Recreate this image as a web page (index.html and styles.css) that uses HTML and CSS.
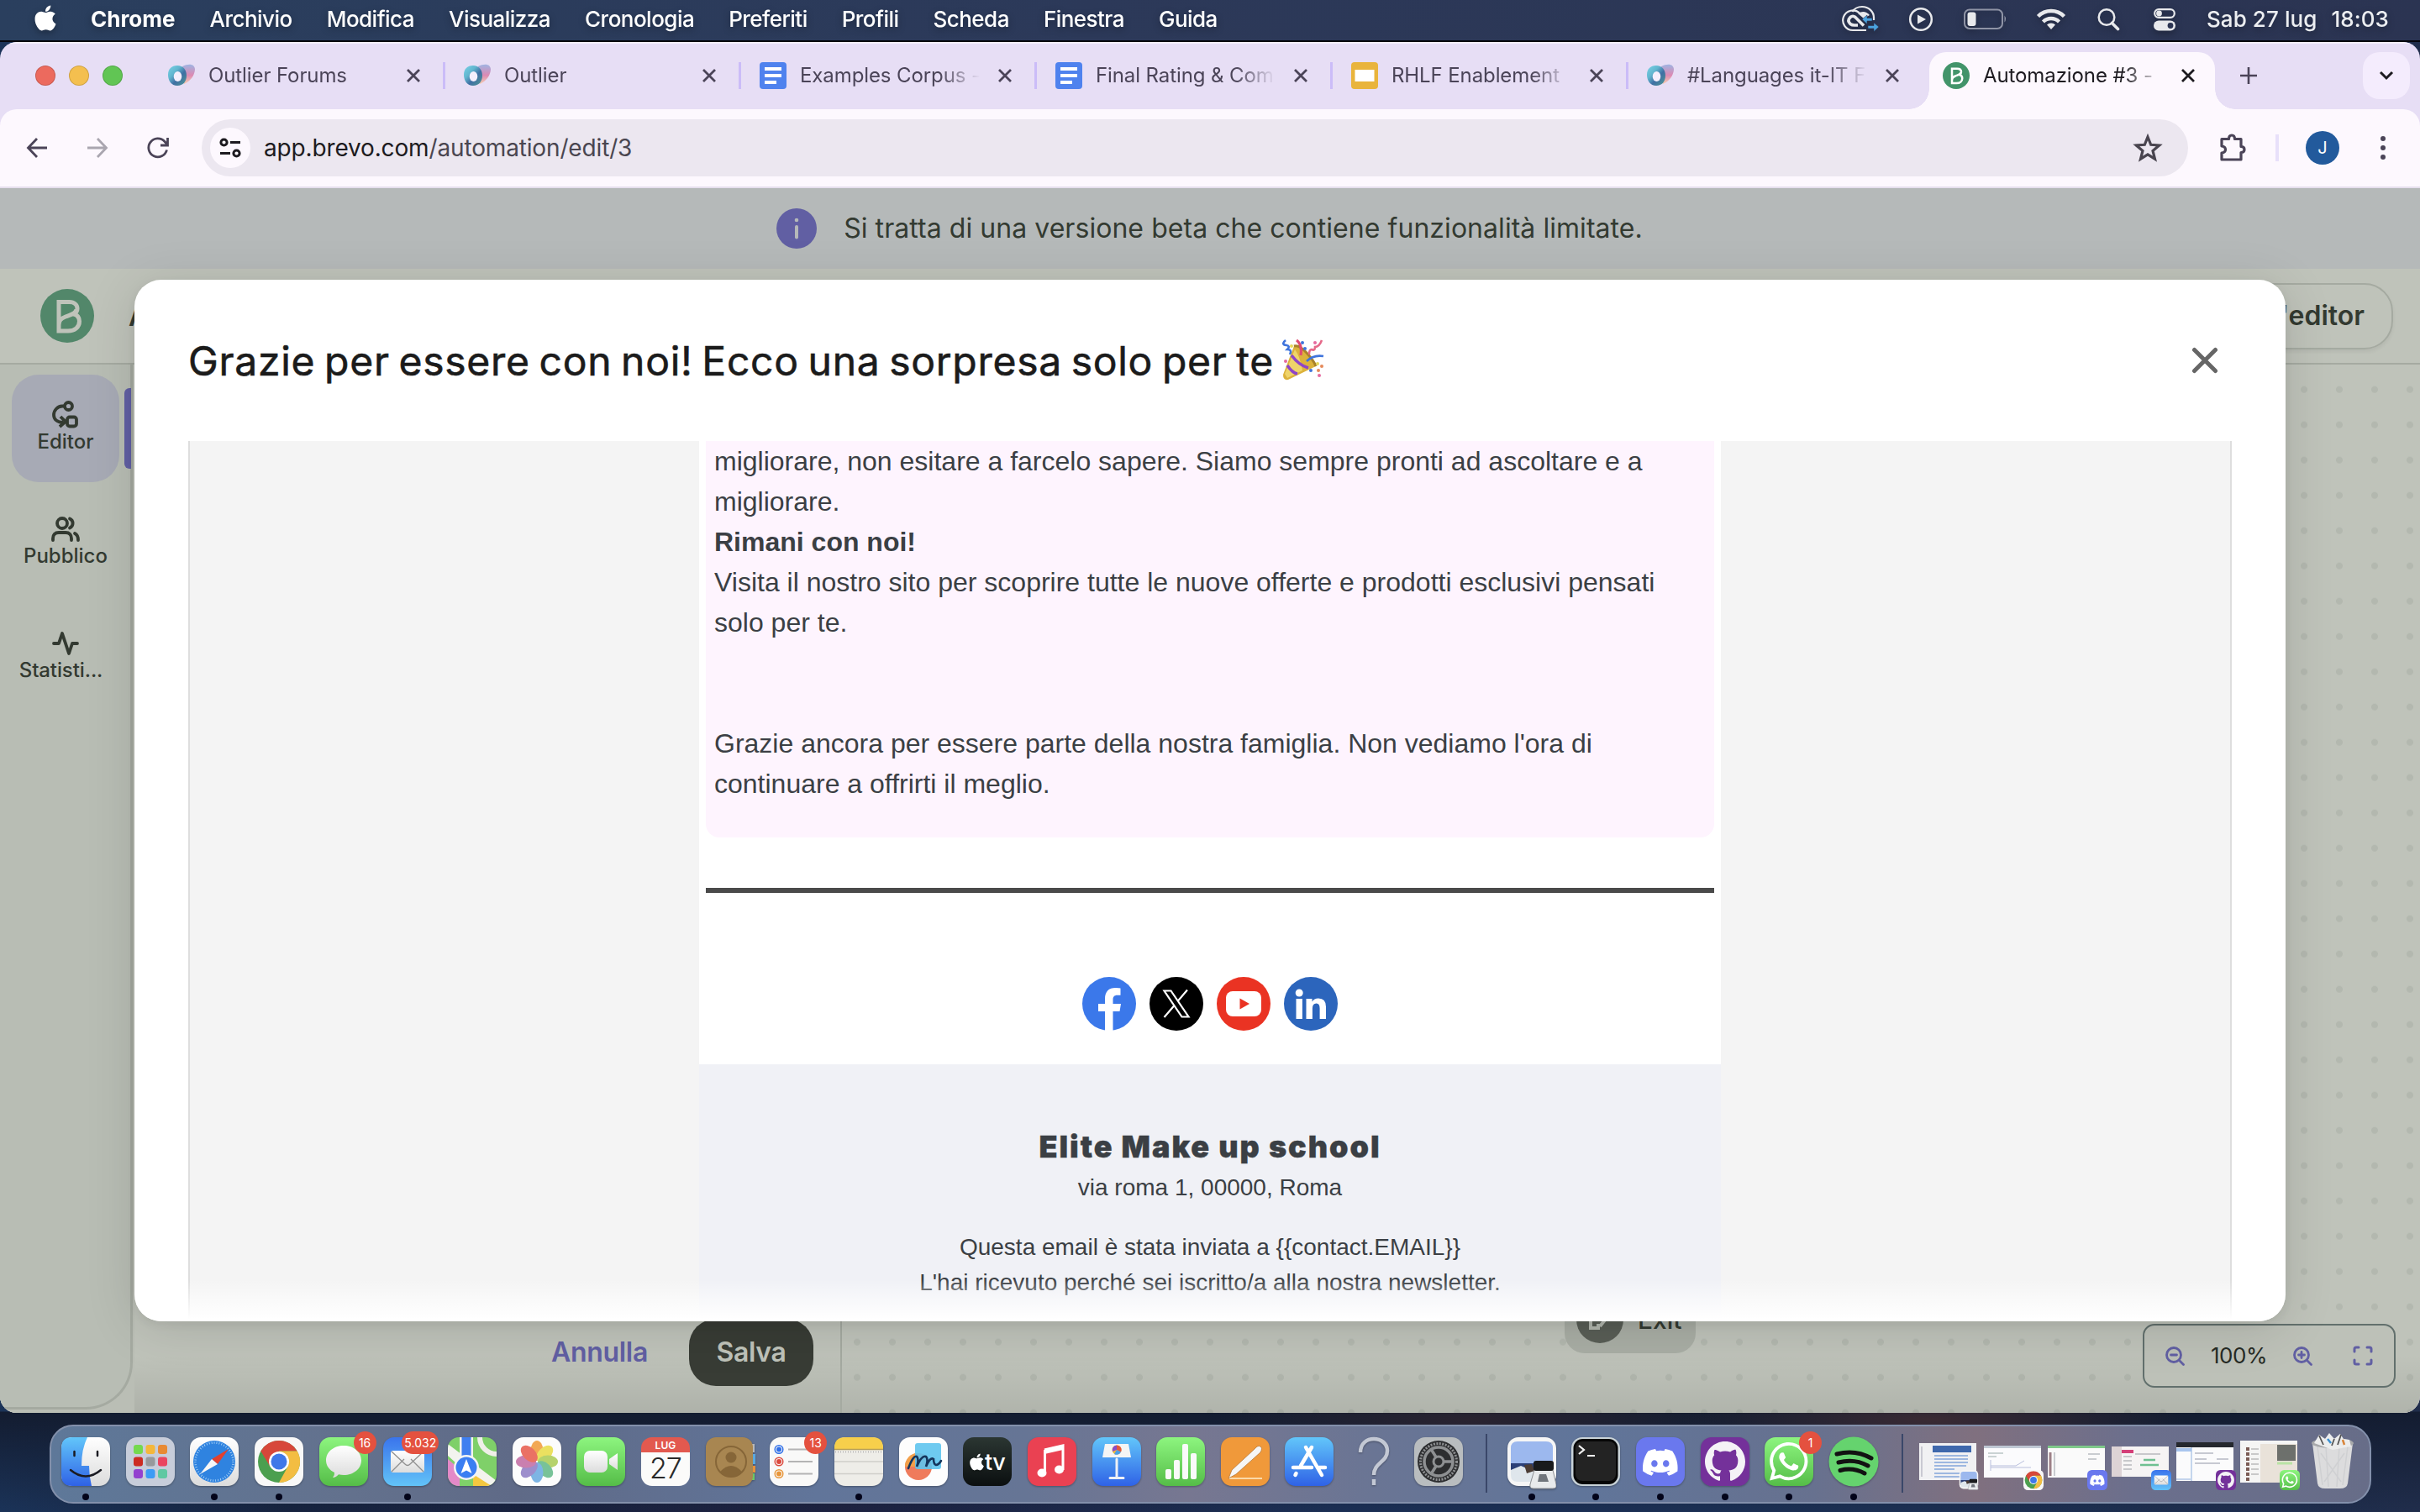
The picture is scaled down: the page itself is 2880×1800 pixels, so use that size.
FILE: index.html
```html
<!DOCTYPE html>
<html lang="it">
<head>
<meta charset="utf-8">
<title>Automazione #3 - Brevo</title>
<link rel="stylesheet" href="styles.css">
</head>
<body>
<svg class="defs" width="0" height="0" aria-hidden="true">
  <defs>
    <linearGradient id="gGreen" x1="0" y1="0" x2="0" y2="1"><stop offset="0" stop-color="#8df57f"/><stop offset="1" stop-color="#55bd48"/></linearGradient>
    <linearGradient id="gBlue" x1="0" y1="0" x2="0" y2="1"><stop offset="0" stop-color="#3a74ec"/><stop offset="1" stop-color="#62c3f8"/></linearGradient>
    <linearGradient id="gSky" x1="0" y1="0" x2="0" y2="1"><stop offset="0" stop-color="#62c6fa"/><stop offset="1" stop-color="#2f62e6"/></linearGradient>
    <linearGradient id="gGrey" x1="0" y1="0" x2="0" y2="1"><stop offset="0" stop-color="#ffffff"/><stop offset="1" stop-color="#dcdcdc"/></linearGradient>
    <linearGradient id="gTeal" x1="0" y1="0" x2="1" y2="1"><stop offset="0" stop-color="#78d2e6"/><stop offset=".35" stop-color="#62b6cf"/><stop offset=".6" stop-color="#3f6fa3"/><stop offset="1" stop-color="#4f9a94"/></linearGradient>
    <linearGradient id="gPink" x1="0" y1="0" x2="0" y2="1"><stop offset="0" stop-color="#9fb4e2"/><stop offset=".55" stop-color="#dc8ab4"/><stop offset="1" stop-color="#f5cdb0"/></linearGradient>
    <symbol id="outlier" viewBox="0 0 32 32">
      <path d="M17 5c8-4 15-3 15 4-.6 7-5 13-13 17z" fill="url(#gPink)"/>
      <path fill-rule="evenodd" d="M11 4c7 0 11 5 11 12s-4 12-11 12S0 22 0 15 4 4 11 4z" fill="url(#gTeal)"/>
      <ellipse cx="11.500" cy="17" rx="4.800" ry="6" fill="#f4effc"/>
    </symbol>
    <symbol id="gdoc" viewBox="0 0 32 32"><rect width="32" height="32" rx="4" fill="#4f82ee"/><path d="M6 6h20v4H6zM6 14h20v4H6zM6 22h14v4H6z" fill="#fff"/></symbol>
    <symbol id="gslide" viewBox="0 0 32 32"><rect width="32" height="32" rx="4" fill="#e9b43c"/><path d="M4.500 9h23v14h-23z" fill="#fff"/></symbol>
    <symbol id="brevo" viewBox="0 0 64 64"><circle cx="32" cy="32" r="32" fill="currentColor"/><path d="M22 15.500h12.500c6 0 9.500 3.500 9.500 8 0 3-1.500 5-4 6.500 4.500 1.200 6.500 4.500 6.500 8.500 0 7-5.500 11.500-13.500 11.500H22zM22 43c0-6 3-8 8-10 6-2.300 13-3.500 13-9" fill="none" stroke="var(--b, #fff)" stroke-width="5"/></symbol>
    <symbol id="x" viewBox="0 0 20 20"><path d="M3 3l14 14M17 3L3 17" stroke="currentColor" stroke-width="2.800" fill="none"/></symbol>

    <symbol id="chrome" viewBox="0 0 58 58"><rect width="58" height="58" rx="13" fill="#f8f8f8"/><circle cx="29" cy="29" r="25" fill="#4c9f4f"/><path d="M7.300 16.500A25 25 0 0 1 50.700 16.500H29L18.500 35z" fill="#d7473a"/><path d="M50.700 16.500A25 25 0 0 1 29 54L39.500 35 29 16.500z" fill="#f3bd42"/><circle cx="29" cy="29" r="12" fill="#fff"/><circle cx="29" cy="29" r="9.500" fill="#3f78e8"/></symbol>
    <symbol id="mail" viewBox="0 0 58 58"><rect width="58" height="58" rx="13" fill="url(#gBlue)"/><rect x="9" y="16" width="40" height="26" rx="3" fill="url(#gGrey)"/><path d="M10 41l15-15m23 15L33 26M10 17l16 15q3 3 6 0l16-15" fill="none" stroke="#909090" stroke-width="1.300"/></symbol>
    <symbol id="discord" viewBox="0 0 58 58"><rect width="58" height="58" rx="13" fill="#6a78ee"/><path transform="translate(8 9) scale(2.600)" fill="#fff" d="M13.545 2.907a13.200 13.200 0 0 0-3.257-1.011.05.05 0 0 0-.052.025c-.141.25-.297.577-.406.833a12.200 12.200 0 0 0-3.658 0 8 8 0 0 0-.412-.833.05.05 0 0 0-.052-.025c-1.125.194-2.220.534-3.257 1.011a.04.04 0 0 0-.021.018C.356 6.024-.213 9.047.066 12.032q.003.022.021.037a13.300 13.300 0 0 0 3.995 2.020.05.05 0 0 0 .056-.019q.463-.63.818-1.329a.05.05 0 0 0-.01-.059l-.018-.011a9 9 0 0 1-1.248-.595.05.05 0 0 1-.02-.066l.015-.019q.127-.095.248-.195a.05.05 0 0 1 .051-.007c2.619 1.196 5.454 1.196 8.041 0a.05.05 0 0 1 .053.007q.121.1.248.195a.05.05 0 0 1-.004.085 8 8 0 0 1-1.249.594.05.05 0 0 0-.03.03.05.05 0 0 0 .003.041c.24.465.515.909.817 1.329a.05.05 0 0 0 .056.019 13.200 13.200 0 0 0 4.001-2.020.05.05 0 0 0 .021-.037c.334-3.451-.559-6.449-2.366-9.106a.03.03 0 0 0-.02-.019m-8.198 7.307c-.789 0-1.438-.724-1.438-1.612s.637-1.613 1.438-1.613c.807 0 1.450.73 1.438 1.613 0 .888-.637 1.612-1.438 1.612m5.316 0c-.788 0-1.438-.724-1.438-1.612s.637-1.613 1.438-1.613c.807 0 1.451.73 1.438 1.613 0 .888-.631 1.612-1.438 1.612"/></symbol>
    <symbol id="github" viewBox="0 0 58 58"><rect width="58" height="58" rx="13" fill="#74319a"/><path transform="translate(5 5) scale(3)" fill="#f4f2f6" d="M8 0C3.580 0 0 3.580 0 8c0 3.540 2.290 6.530 5.470 7.590.4.07.55-.17.55-.38 0-.19-.01-.82-.01-1.490-2.010.37-2.530-.49-2.690-.94-.09-.23-.48-.94-.82-1.130-.28-.15-.68-.52-.01-.53.63-.01 1.080.58 1.230.82.72 1.210 1.870.87 2.330.66.07-.52.28-.87.51-1.070-1.780-.2-3.640-.89-3.640-3.950 0-.87.31-1.590.82-2.150-.08-.2-.36-1.020.08-2.120 0 0 .67-.21 2.200.82.64-.18 1.320-.27 2-.27.68 0 1.360.09 2 .27 1.530-1.040 2.200-.82 2.200-.82.44 1.100.16 1.920.08 2.120.51.56.82 1.270.82 2.150 0 3.070-1.870 3.750-3.650 3.950.29.25.54.73.54 1.480 0 1.070-.01 1.930-.01 2.200 0 .21.15.46.55.38A8.013 8.013 0 0016 8c0-4.420-3.580-8-8-8z"/></symbol>
    <symbol id="whatsapp" viewBox="0 0 58 58"><rect width="58" height="58" rx="13" fill="url(#gGreen)"/><path transform="translate(6 6) scale(2.850)" fill="#fff" d="M13.601 2.326A7.850 7.850 0 0 0 7.994 0C3.627 0 .068 3.558.064 7.926c0 1.399.366 2.760 1.057 3.965L0 16l4.204-1.102a7.900 7.900 0 0 0 3.790.965h.004c4.368 0 7.926-3.558 7.930-7.930A7.900 7.900 0 0 0 13.600 2.326zM7.994 14.521a6.600 6.600 0 0 1-3.356-.92l-.24-.144-2.494.654.666-2.433-.156-.251a6.560 6.560 0 0 1-1.007-3.505c0-3.626 2.957-6.584 6.591-6.584a6.560 6.560 0 0 1 4.660 1.931 6.560 6.560 0 0 1 1.928 4.660c-.004 3.639-2.961 6.592-6.592 6.592m3.615-4.934c-.197-.099-1.170-.578-1.353-.646-.182-.065-.315-.099-.445.099-.133.197-.513.646-.627.775-.114.133-.232.148-.43.05-.197-.1-.836-.308-1.592-.985-.59-.525-.985-1.175-1.103-1.372-.114-.198-.011-.304.088-.403.087-.088.197-.232.296-.346.1-.114.133-.198.198-.33.065-.134.034-.248-.015-.347-.05-.099-.445-1.076-.612-1.470-.16-.389-.323-.335-.445-.34-.114-.007-.247-.007-.38-.007a.73.73 0 0 0-.529.247c-.182.198-.691.677-.691 1.654s.71 1.916.81 2.049c.098.133 1.394 2.132 3.383 2.992.47.205.84.326 1.129.418.475.152.904.129 1.246.08.38-.058 1.171-.48 1.338-.943.164-.464.164-.86.114-.943-.049-.084-.182-.133-.38-.232"/></symbol>
    <symbol id="preview" viewBox="0 0 58 62"><rect width="58" height="58" rx="13" fill="#f6f6f6"/><path d="M4 13q0-8 8-8h34q8 0 8 8v19H4z" fill="#9cb8ee"/><path d="M4 31h50v14H4z" fill="#2b3f77"/><path d="M4 39l12-5 14 6 24-2v6q0 9-8 9H12q-8 0-8-8z" fill="#dfe6ec"/><path d="M20 33l9-1 3 8-9 3z" fill="#4b3c35"/><path d="M32 39h22l4 17q1 5-4 5H31q-5 0-4-5z" fill="#e8eaec" stroke="#8d9094"/><rect x="31" y="28" width="24" height="12" rx="3" fill="#191a1c"/><path d="M38 44h8l3 9H36z" fill="#70757c"/></symbol>
    <symbol id="apple" viewBox="0 24 384 464"><path fill="currentColor" d="M318.700 268.700c-.2-36.700 16.400-64.400 50-84.800-18.800-26.900-47.200-41.700-84.700-44.600-35.500-2.800-74.300 20.700-88.500 20.700-15 0-49.400-19.700-76.400-19.700C63.300 141.200 4 184.800 4 273.500q0 39.300 14.400 81.200c12.800 36.700 59 126.700 107.200 125.200 25.200-.6 43-17.900 75.800-17.900 31.800 0 48.300 17.900 76.400 17.900 48.600-.7 90.400-82.500 102.600-119.300-65.200-30.700-61.700-90-61.700-91.900zm-56.600-164.200c27.300-32.400 24.800-61.900 24-72.500-24.100 1.400-52 16.400-67.900 34.900-17.500 19.800-27.800 44.300-25.600 71.900 26.100 2 49.900-11.400 69.500-34.300z"/></symbol>
  </defs>
</svg>

<div class="desktop">
  <header class="menubar">
    <svg class="apple" viewBox="0 24 384 464"><use href="#apple" y="24" width="384" height="464"/></svg>
    <nav class="menus">
      <span class="app-name">Chrome</span><span>Archivio</span><span>Modifica</span><span>Visualizza</span><span>Cronologia</span><span>Preferiti</span><span>Profili</span><span>Scheda</span><span>Finestra</span><span>Guida</span>
    </nav>
    <div class="status">
      <svg width="46" height="34" viewBox="0 0 46 34" fill="none" stroke="#e8e9ec" stroke-width="2.200"><path d="M13.500 8C16 4 20 2 25 2c8 0 14 6 14 13v3"/><path d="M30 30H14A11.800 11.800 0 1 1 22 9.500"/><path d="M27 24.500L17 14.500q-3-2.500-6 0-4 4 0 8 2 1.500 5 1.500h4" stroke-width="3.600"/><path d="M20 10q8-5 14 2l-7 4z" fill="#e8e9ec" stroke="none"/><path d="M25 17l6-5v3.500h6V19h-6v3.500zM45 26l-6-5v3.500h-7V28h7v3.500z" fill="#4aa3df" stroke="#2b3452" stroke-width=".6"/></svg>
      <svg width="30" height="30" viewBox="0 0 30 30"><circle cx="15" cy="15" r="12.800" fill="none" stroke="#e8e9ec" stroke-width="2.500"/><path d="M11 9.500v11l10-5.500z" fill="#e8e9ec"/></svg>
      <svg width="52" height="26" viewBox="0 0 52 26"><rect x="1" y="1.500" width="45" height="22.500" rx="6" fill="none" stroke="#8f94a6" stroke-width="2"/><rect x="4.500" y="4.500" width="10" height="16.500" rx="3" fill="#e8e9ec"/><path d="M48.500 8.500q3 4 0 8z" fill="#8f94a6"/></svg>
      <svg width="36" height="28" viewBox="0 0 36 28" fill="none" stroke="#e8e9ec" stroke-width="4.500"><path d="M2.500 10.500a22 22 0 0 1 31 0M8.500 17a13.500 13.500 0 0 1 19 0"/><path d="M18 26l-5-5.500a7 7 0 0 1 10 0z" fill="#e8e9ec" stroke="none"/></svg>
      <svg width="28" height="28" viewBox="0 0 28 28" fill="none" stroke="#e8e9ec"><circle cx="12" cy="11.500" r="9.300" stroke-width="2.500"/><path d="M18.500 18.500l7 7" stroke-width="3.600" stroke-linecap="round"/></svg>
      <svg width="28" height="28" viewBox="0 0 28 28"><rect x="2.200" y="2.200" width="23.600" height="9.600" rx="4.800" fill="none" stroke="#e8e9ec" stroke-width="2.200"/><circle cx="7.500" cy="7" r="3.400" fill="#e8e9ec"/><rect x="1" y="15.500" width="26" height="12" rx="6" fill="#e8e9ec"/><circle cx="21" cy="21.500" r="3.400" fill="#2b3452"/></svg>
    </div>
    <div class="clock"><span>Sab 27 lug</span><span>18:03</span></div>
  </header>

  <main class="window">
    <div class="tabstrip">
      <div class="lights"><i class="red"></i><i class="yellow"></i><i class="green"></i></div>
      <div class="tab"><svg class="fav"><use href="#outlier"/></svg><span class="tab-title">Outlier Forums</span><svg class="tx"><use href="#x"/></svg></div>
      <div class="tab"><svg class="fav"><use href="#outlier"/></svg><span class="tab-title">Outlier</span><svg class="tx"><use href="#x"/></svg></div>
      <div class="tab"><svg class="fav"><use href="#gdoc"/></svg><span class="tab-title">Examples Corpus -</span><svg class="tx"><use href="#x"/></svg></div>
      <div class="tab"><svg class="fav"><use href="#gdoc"/></svg><span class="tab-title">Final Rating &amp; Com</span><svg class="tx"><use href="#x"/></svg></div>
      <div class="tab"><svg class="fav"><use href="#gslide"/></svg><span class="tab-title">RHLF Enablement</span><svg class="tx"><use href="#x"/></svg></div>
      <div class="tab last"><svg class="fav"><use href="#outlier"/></svg><span class="tab-title">#Languages it-IT F</span><svg class="tx"><use href="#x"/></svg></div>
      <div class="tab active"><svg class="fav brevo-fav"><use href="#brevo"/></svg><span class="tab-title">Automazione #3 -</span><svg class="tx"><use href="#x"/></svg></div>
      <svg class="newtab" width="24" height="24" viewBox="0 0 24 24"><path d="M12 2v20M2 12h20" stroke="#4b4458" stroke-width="2.600"/></svg>
      <div class="tabsearch"><svg width="20" height="14" viewBox="0 0 20 14"><path d="M3 3l7 7 7-7" fill="none" stroke="#1d1b20" stroke-width="3"/></svg></div>
    </div>

    <div class="toolbar">
      <div class="navs">
        <svg width="28" height="28" viewBox="0 0 28 28" fill="none" stroke="#4b4458" stroke-width="2.800"><path d="M26 14H4M14 3L3.500 14 14 25"/></svg>
        <svg width="28" height="28" viewBox="0 0 28 28" fill="none" stroke="#aaa6b0" stroke-width="2.800"><path d="M2 14h22M14 3l10.500 11L14 25"/></svg>
        <svg width="28" height="28" viewBox="0 0 28 28" fill="none" stroke="#4b4458" stroke-width="2.800"><path d="M24.500 16.500A11 11 0 1 1 22 6.500l3 3.500M25.500 2v9H17"/></svg>
      </div>
      <div class="omnibox">
        <span class="siteinfo"><svg width="26" height="24" viewBox="0 0 26 24" fill="none" stroke="#1d1b20" stroke-width="3"><circle cx="5.500" cy="5.500" r="3.600"/><path d="M13 5.500h12M1 18.500h12"/><circle cx="20.500" cy="18.500" r="3.600"/></svg></span>
        <span class="url">app.brevo.com<b>/automation/edit/3</b></span>
        <svg class="star" width="36" height="34" viewBox="0 0 36 34"><path d="M18 4l3.700 9.300 10 .7-7.700 6.500 2.500 9.700L18 25l-8.500 5.200 2.500-9.700L4.300 14l10-.7z" fill="none" stroke="#49454f" stroke-width="3.200"/></svg>
      </div>
      <svg class="puzzle" width="36" height="36" viewBox="0 0 36 36"><path d="M5 7.500h8.500q0-4.500 3.500-4.500t3.500 4.500H28v9q4 0 4 3.500t-4 3.500V32H5v-8q4.500-.5 4.500-4T5 16z" fill="none" stroke="#4b4458" stroke-width="3.200" stroke-linejoin="round"/></svg>
      <i class="tsep"></i>
      <span class="avatar">J</span>
      <span class="kebab"><i></i><i></i><i></i></span>
    </div>

    <section class="page">
      <div class="banner"><svg width="48" height="48" viewBox="0 0 48 48"><circle cx="24" cy="24" r="24" fill="#615fa3"/><circle cx="24" cy="14" r="2.300" fill="#b5b9b9"/><path d="M24 22v12.500" stroke="#b5b9b9" stroke-width="4" stroke-linecap="round"/></svg><span>Si tratta di una versione beta che contiene funzionalità limitate.</span></div>
      <div class="apphead"><svg class="logo"><use href="#brevo"/></svg><span class="wf-name">Automazione #3</span><span class="exit-btn">Esci dall'editor</span></div>
      <div class="workspace">
        <aside class="rail-wrap">
          <div class="rail">
            <div class="rail-item on">
              <svg width="36" height="36" viewBox="0 0 36 36" fill="none" stroke="#333a31" stroke-width="3.800"><circle cx="21.500" cy="8.500" r="4.500"/><rect x="20" y="21.500" width="11" height="11" rx="3"/><path d="M17 8.500h-3a10.500 10.500 0 0 0-10 10.500c0 5 4 9 11 9M12 21l6 6-7 6"/></svg>
              <span>Editor</span>
            </div>
            <div class="rail-item">
              <svg width="36" height="36" viewBox="0 0 36 36" fill="none" stroke="#333a31" stroke-width="3.800" stroke-linecap="round"><circle cx="14" cy="12" r="6"/><path d="M3 32v-2q0-7 7-7h8q7 0 7 7v2M23 6.500a6 6 0 0 1 0 11M29 24q4 2 4 8"/></svg>
              <span>Pubblico</span>
            </div>
            <div class="rail-item">
              <svg width="36" height="36" viewBox="0 0 36 36" fill="none" stroke="#333a31" stroke-width="3.800" stroke-linecap="round" stroke-linejoin="round"><path d="M4 19h6l4-12 8 24 4-12h6"/></svg>
              <span class="cut">Statisti...</span>
            </div>
          </div>
          <i class="rail-mark"></i>
        </aside>
        <div class="panel"><div class="panel-foot"><span class="cancel">Annulla</span><span class="save">Salva</span></div></div>
        <div class="canvas">
          <div class="node"><svg width="56" height="56" viewBox="0 0 56 56"><circle cx="28" cy="28" r="28" fill="#595e56"/><path d="M24 17h-7v21h9v-5M28 36l12-15" fill="none" stroke="#b3b8af" stroke-width="4"/></svg><span>Exit</span></div>
          <div class="zoombox">
            <svg width="24" height="24" viewBox="0 0 24 24" fill="none" stroke="#615fa3" stroke-width="2.800" stroke-linecap="round"><circle cx="11" cy="11" r="8.500"/><path d="M17.500 17.500l5 5M7.500 11h7"/></svg>
            <span>100%</span>
            <svg width="24" height="24" viewBox="0 0 24 24" fill="none" stroke="#615fa3" stroke-width="2.800" stroke-linecap="round"><circle cx="11" cy="11" r="8.500"/><path d="M17.500 17.500l5 5M7.500 11h7M11 7.500v7"/></svg>
            <svg class="full" width="24" height="24" viewBox="0 0 24 24" fill="none" stroke="#615fa3" stroke-width="3" stroke-linecap="round"><path d="M2 7V4q0-2 2-2h3M17 2h3q2 0 2 2v3M22 17v3q0 2-2 2h-3M7 22H4q-2 0-2-2v-3"/></svg>
          </div>
        </div>
      </div>

      <div class="modal">
        <div class="modal-head">
          <h1>Grazie per essere con noi! Ecco una sorpresa solo per te</h1>
          <svg class="party" width="50" height="50" viewBox="0 0 50 50"><path d="M1 42L14 8q5-2 14 8t12 16L7 48q-6 1-6-6z" fill="#dcb23b"/><path d="M3 41L15 12q6 8 9 25L6 46z" fill="#efd46a"/><path d="M11 19q9 12 20 15M6 31q6 9 12 10" fill="none" stroke="#8e44c8" stroke-width="3.500"/><path d="M14 8q6-2 15 8t11 16" fill="none" stroke="#a9822a" stroke-width="3"/><path d="M17 1q7 5 5 18" fill="none" stroke="#e04a72" stroke-width="3.200"/><path d="M29 26q8-8 20-6M4 1q-6 5 1 6 5 1 1 5 6 0 3 6" fill="none" stroke="#3f74dc" stroke-width="2.600"/><path d="M32 18q0-6 3-6 4 2 4-3 5 0 8-8" fill="none" stroke="#e56a8a" stroke-width="2.600"/><g fill="#e58a5a"><circle cx="43" cy="37" r="2"/><circle cx="47" cy="32" r="2"/></g><g fill="#e5d75a"><circle cx="11" cy="8" r="2"/><circle cx="42" cy="29" r="2"/></g><g fill="#3f74dc"><circle cx="24" cy="4" r="2"/><circle cx="27" cy="11" r="2"/><circle cx="34" cy="37" r="2"/></g><g fill="#e56aa0"><circle cx="4" cy="26" r="2"/><circle cx="39" cy="4" r="2"/><circle cx="44" cy="43" r="2"/></g></svg>
          <svg class="close" width="32" height="32" viewBox="0 0 32 32"><path d="M3.500 3.500l25 25M28.500 3.500l-25 25" stroke="#666" stroke-width="5" stroke-linecap="round"/></svg>
        </div>
        <div class="frame">
          <div class="email">
            <div class="pink">
              <p>migliorare, non esitare a farcelo sapere. Siamo sempre pronti ad ascoltare e a<br>migliorare.<br><strong>Rimani con noi!</strong><br>Visita il nostro sito per scoprire tutte le nuove offerte e prodotti esclusivi pensati<br>solo per te.</p>
              <p class="thanks">Grazie ancora per essere parte della nostra famiglia. Non vediamo l'ora di<br>continuare a offrirti il meglio.</p>
            </div>
            <hr class="rule">
            <div class="social">
              <svg width="64" height="64" viewBox="0 0 64 64"><circle cx="32" cy="32" r="32" fill="#3b78ea"/><path d="M27 64V41h-8v-9h8v-6c0-8.500 4.500-13 12.500-13 2.500 0 6 .5 6 .5v8.300h-3.700c-4 0-5.300 2.200-5.300 4.900V32h9.500l-1.500 9h-8v23z" fill="#fff"/></svg>
              <svg width="64" height="64" viewBox="0 0 64 64"><circle cx="32" cy="32" r="32"/><path d="M17.500 16.500h8l21 31h-8zM45 15.500L33.500 29M29.500 34L17.500 48" fill="none" stroke="#fff" stroke-width="2.200"/></svg>
              <svg width="64" height="64" viewBox="0 0 64 64"><circle cx="32" cy="32" r="32" fill="#ea3323"/><rect x="11" y="17" width="42" height="30" rx="8" fill="#fff"/><path d="M27.500 25.500v13L39 32z" fill="#ea3323"/></svg>
              <svg width="64" height="64" viewBox="0 0 64 64"><circle cx="32" cy="32" r="32" fill="#2c65bc"/><circle cx="18.200" cy="19" r="4.500" fill="#fff"/><path d="M14.500 26h7.400v24h-7.400zM26.500 26h7v3.500q2.500-4 7.500-4 9 0 9 10V50h-7.400V37.500q0-6-4-6-4.700 0-4.700 6V50h-7.400z" fill="#fff"/></svg>
            </div>
            <div class="foot">
              <h2>Elite Make up school</h2>
              <p class="addr">via roma 1, 00000, Roma</p>
              <p class="legal">Questa email è stata inviata a {{contact.EMAIL}}<br>L'hai ricevuto perché sei iscritto/a alla nostra newsletter.</p>
            </div>
          </div>
        </div>
      </div>
    </section>
  </main>

  <footer class="dock">
    <div class="app run"><svg viewBox="0 0 58 58"><rect width="58" height="58" rx="13" fill="url(#gGrey)"/><path d="M13 0h18q-7 14-7 34h9q0 12 3 24H13Q0 58 0 45V13Q0 0 13 0z" fill="url(#gSky)"/><path d="M15.500 17v5M43 17v5M11 39q18 15 36 0" fill="none" stroke="#1b1b22" stroke-width="2.500" stroke-linecap="round"/></svg></div>
    <div class="app"><svg viewBox="0 0 58 58"><rect width="58" height="58" rx="13" fill="#c7cdda"/><g><rect x="9" y="9" width="11" height="11" rx="3" fill="#74d94f"/><rect x="23.500" y="9" width="11" height="11" rx="3" fill="#f4b73c"/><rect x="38" y="9" width="11" height="11" rx="3" fill="#e88a34"/><rect x="9" y="23.500" width="11" height="11" rx="3" fill="#cc2b22"/><rect x="23.500" y="23.500" width="11" height="11" rx="3" fill="#97999c"/><rect x="38" y="23.500" width="11" height="11" rx="3" fill="#ea4560"/><rect x="9" y="38" width="11" height="11" rx="3" fill="#9341cf"/><rect x="23.500" y="38" width="11" height="11" rx="3" fill="#3b9bf5"/><rect x="38" y="38" width="11" height="11" rx="3" fill="#5fc8a2"/></g></svg></div>
    <div class="app run"><svg viewBox="0 0 58 58"><rect width="58" height="58" rx="13" fill="url(#gGrey)"/><circle cx="29" cy="29" r="25" fill="#2f83e0"/><circle cx="29" cy="29" r="22.500" fill="none" stroke="#b9dcf8" stroke-width="2.500" stroke-dasharray=".8 2.200"/><path d="M46 14L33 32l-7-6z" fill="#e2402f"/><path d="M12 44l14-18 7 6z" fill="#f6f6f6"/></svg></div>
    <div class="app run"><svg><use href="#chrome"/></svg></div>
    <div class="app"><svg viewBox="0 0 58 58"><rect width="58" height="58" rx="13" fill="url(#gGreen)"/><path d="M29 10c12 0 21 7.500 21 17.500S41 45 29 45q-3 0-6-.7-3 3.700-7 3.700 2.500-3 2-6C12 39 8 34 8 27.500 8 17.500 17 10 29 10z" fill="url(#gGrey)"/></svg><b class="badge">16</b></div>
    <div class="app run"><svg><use href="#mail"/></svg><b class="badge wide">5.032</b></div>
    <div class="app"><svg viewBox="0 0 58 58"><clipPath id="mc"><rect width="58" height="58" rx="13"/></clipPath><g clip-path="url(#mc)"><rect width="58" height="58" fill="#7fd069"/><path d="M0 8l58 44v6H40L0 22z" fill="#f3f3ee"/><path d="M0 26l14 12v20H0z" fill="#e389c8"/><path d="M30 58V44l22 14z" fill="#f4c840"/><path d="M14 0h16v40H14z" fill="#f3f3ee"/><path d="M16.500 0h11v40h-11z" fill="#3f7ff0"/><circle cx="58" cy="0" r="20" fill="none" stroke="#efefe8" stroke-width="6"/><circle cx="22" cy="36" r="15" fill="#f4f4f4"/><circle cx="22" cy="36" r="12.500" fill="#3b7ef2"/><path d="M22 26l6.500 17-6.500-3.500-6.500 3.500z" fill="#fff"/></g></svg></div>
    <div class="app"><svg viewBox="0 0 58 58"><rect width="58" height="58" rx="13" fill="#fcfcfc"/><g opacity=".85"><ellipse cx="29" cy="16" rx="7.500" ry="12" fill="#f19a38"/><ellipse cx="29" cy="16" rx="7.500" ry="12" fill="#e9dc45" transform="rotate(45 29 29)"/><ellipse cx="29" cy="16" rx="7.500" ry="12" fill="#aacb52" transform="rotate(90 29 29)"/><ellipse cx="29" cy="16" rx="7.500" ry="12" fill="#62b987" transform="rotate(135 29 29)"/><ellipse cx="29" cy="16" rx="7.500" ry="12" fill="#68a9e0" transform="rotate(180 29 29)"/><ellipse cx="29" cy="16" rx="7.500" ry="12" fill="#8d7bc4" transform="rotate(225 29 29)"/><ellipse cx="29" cy="16" rx="7.500" ry="12" fill="#c26aa2" transform="rotate(270 29 29)"/><ellipse cx="29" cy="16" rx="7.500" ry="12" fill="#e8594a" transform="rotate(315 29 29)"/></g></svg></div>
    <div class="app"><svg viewBox="0 0 58 58"><rect width="58" height="58" rx="13" fill="url(#gGreen)"/><rect x="9" y="16" width="28" height="26" rx="7" fill="url(#gGrey)"/><path d="M39 26l10-7v20l-10-7z" fill="url(#gGrey)"/></svg></div>
    <div class="app cal"><span class="mon">LUG</span><span class="day">27</span></div>
    <div class="app"><svg viewBox="0 0 58 58"><path d="M50 8h8v10h-8z" fill="#b9b9b9"/><path d="M50 20h9v12h-9z" fill="#5aa9e0"/><path d="M50 34h9v8h-9z" fill="#e8923a"/><path d="M50 43h8v8h-8z" fill="#6dc964"/><rect width="56" height="58" rx="12" fill="#a88651"/><circle cx="30" cy="29" r="18" fill="none" stroke="#866638" stroke-width="2"/><circle cx="30" cy="24" r="6.500" fill="#866638"/><path d="M17 41q13-14 26 0-13 12-26 0z" fill="#866638"/></svg></div>
    <div class="app"><svg viewBox="0 0 58 58"><rect width="58" height="58" rx="13" fill="#f9f9f8"/><path d="M22 14.500h29M22 29h29M22 43.500h29" stroke="#b4b4b4" stroke-width="1.800"/><g fill="none" stroke-width="1.500"><circle cx="11" cy="14.500" r="4.800" stroke="#2f6fe8"/><circle cx="11" cy="29" r="4.800" stroke="#dc4a3e"/><circle cx="11" cy="43.500" r="4.800" stroke="#e8963a"/></g><circle cx="11" cy="14.500" r="3" fill="#2f6fe8"/><circle cx="11" cy="29" r="3" fill="#dc4a3e"/><circle cx="11" cy="43.500" r="3" fill="#e8963a"/></svg><b class="badge">13</b></div>
    <div class="app run"><svg viewBox="0 0 58 58"><rect width="58" height="58" rx="13" fill="#eeede8"/><path d="M13 0h32q13 0 13 13v1H0v-1Q0 0 13 0z" fill="#f7cf4b"/><path d="M0 14.500h58" stroke="#b79f55" stroke-width="1.500"/><path d="M1 17.500h56" stroke="#aaa" stroke-width="1.500" stroke-dasharray="1 2"/><path d="M0 29h58M0 43.500h58" stroke="#cfcec9" stroke-width="1.500"/></svg></div>
    <div class="app"><svg viewBox="0 0 58 58"><rect width="58" height="58" rx="13" fill="#fdfdfd"/><circle cx="23" cy="35" r="16" fill="#ef7b5c"/><path d="M7 35a16 16 0 0 1 12-16v16z" fill="#f2a04a"/><rect x="19" y="7" width="31" height="31" rx="3" fill="#5ec4ee" opacity=".9"/><path d="M11 37q6-16 10-14 3 3 0 12 6-14 11-12 3 3 0 12 5-12 9-9 0 6 3 7 3 0 6-5" fill="none" stroke="#15355c" stroke-width="2.600" stroke-linecap="round"/></svg></div>
    <div class="app tv"><svg class="tv-apple" viewBox="0 24 384 464"><use href="#apple" y="24" width="384" height="464"/></svg><span>tv</span></div>
    <div class="app"><svg viewBox="0 0 58 58"><rect width="58" height="58" rx="13" fill="#ea4152"/><path d="M20 15l22-5v29" fill="none" stroke="#fff" stroke-width="3"/><path d="M20 14l22-5v6l-22 5z" fill="#fff"/><path d="M20.500 15v27" stroke="#fff" stroke-width="3"/><ellipse cx="17" cy="42.500" rx="5.500" ry="5" fill="#fff"/><ellipse cx="37.500" cy="38.500" rx="5.500" ry="5" fill="#fff"/></svg></div>
    <div class="app"><svg viewBox="0 0 58 58"><rect width="58" height="58" rx="13" fill="url(#gSky)"/><path d="M15 8h28l3 16H12z" fill="#f5f5f5"/><circle cx="29" cy="15" r="5.500" fill="#f1b83a"/><path d="M29 15V9.500a5.500 5.500 0 0 1 5 8z" fill="#e4573c"/><path d="M29 15l5 2.500a5.500 5.500 0 0 1-8 2.500z" fill="#4c9fe8"/><path d="M29 15V9.500a5.500 5.500 0 0 0-5 7.500z" fill="#8a4bc9"/><path d="M29 26v22M21 48.500h16" stroke="#eef1f6" stroke-width="3" stroke-linecap="round"/></svg></div>
    <div class="app"><svg viewBox="0 0 58 58"><rect width="58" height="58" rx="13" fill="url(#gGreen)"/><g fill="#fafafa"><rect x="11" y="38" width="7" height="12" rx="2"/><rect x="21" y="27" width="7" height="23" rx="2"/><rect x="31" y="8" width="7" height="42" rx="2"/><rect x="41" y="19" width="7" height="31" rx="2"/></g></svg></div>
    <div class="app"><svg viewBox="0 0 58 58"><rect width="58" height="58" rx="13" fill="#f0993a"/><path d="M10 49h39" stroke="#fbd9a8" stroke-width="2"/><path d="M47 11q3 2 0 7L18 44l-9 5 4-10L40 14q4-5 7-3z" fill="#f6f6f6" stroke="#b87a3a" stroke-width=".8"/></svg></div>
    <div class="app"><svg viewBox="0 0 58 58"><rect width="58" height="58" rx="13" fill="url(#gSky)"/><path d="M25 12l19 33M32 12L19 34M13.500 43l-1 2M10 36h22M41 36h7" fill="none" stroke="#fff" stroke-width="4.500" stroke-linecap="round"/></svg></div>
    <div class="app"><svg viewBox="0 0 58 58"><path d="M13 18c0-22 32-20 32-2 0 14-16 14-16 29M29 50v7" fill="none" stroke="#c3c8d4" stroke-width="4.500"/></svg></div>
    <div class="app"><svg viewBox="0 0 58 58"><rect width="58" height="58" rx="13" fill="#b9bdbf"/><circle cx="29" cy="29" r="25" fill="#2d2e30"/><circle cx="29" cy="29" r="21.500" fill="none" stroke="#8e9092" stroke-width="3" stroke-dasharray="2 1.500"/><circle cx="29" cy="29" r="17" fill="none" stroke="#8e9092" stroke-width="3.500"/><circle cx="29" cy="29" r="6" fill="none" stroke="#8e9092" stroke-width="3"/><path d="M34 29h12M26.500 24.500L20 14M26.500 33.500L20 44" stroke="#8e9092" stroke-width="3.500"/></svg></div>
    <i class="dsep"></i>
    <div class="app run"><svg class="tall" viewBox="0 0 58 62"><use href="#preview" width="58" height="62"/></svg></div>
    <div class="app run"><svg viewBox="0 0 58 58"><rect width="58" height="58" rx="13" fill="#c9d3d8"/><rect x="2.500" y="2" width="53" height="54" rx="11" fill="#060606"/><rect x="5" y="5" width="48" height="47" rx="8" fill="#232323"/><path d="M9 10l6 5-6 5M19 22h9" fill="none" stroke="#f5f5f5" stroke-width="2.200"/></svg></div>
    <div class="app run"><svg><use href="#discord"/></svg></div>
    <div class="app run"><svg><use href="#github"/></svg></div>
    <div class="app run"><svg><use href="#whatsapp"/></svg><b class="badge">1</b></div>
    <div class="app run"><svg viewBox="0 0 58 58"><circle cx="29" cy="29" r="29.500" fill="#65d36e"/><path d="M9 20q22-6 41 5M11 30q19-5 35 4M13 39.500q15-4 29 3.500" fill="none" stroke="#121212" stroke-width="5" stroke-linecap="round"/></svg></div>
    <i class="dsep second"></i>
    <div class="minis">
      <div class="mini"><svg viewBox="0 0 68 44"><rect width="68" height="44" fill="#f1f1f3"/><path d="M16 3h46v8H16z" fill="#3f68ac"/><path d="M18 15h40M18 19h40M18 23h40M18 27h38M18 31h24M18 36h36M18 40h40" stroke="#9db7e0" stroke-width="2"/><path d="M3 4v36" stroke="#c9c9d2" stroke-width="2"/></svg><svg class="chip"><use href="#preview"/></svg></div>
      <div class="mini"><svg viewBox="0 0 68 38"><rect width="68" height="38" fill="#fbfbfd"/><path d="M0 1.500h68" stroke="#bfc8d4" stroke-width="3"/><path d="M5 9h18M5 13h10" stroke="#9aa" stroke-width="1"/><path d="M8 30V17M8 26h48M8 24h30l10-6" fill="none" stroke="#b9bfdc"/></svg><svg class="chip"><use href="#chrome"/></svg></div>
      <div class="mini"><svg viewBox="0 0 68 38"><rect width="68" height="38" fill="#fafafa"/><path d="M0 1.500h68" stroke="#7fc98a" stroke-width="3"/><path d="M3 8v28" stroke="#9c7f86" stroke-width="3"/><path d="M8 8v28M48 10h14M48 16h10" stroke="#c9ccd0" stroke-width="2"/></svg><svg class="chip"><use href="#discord"/></svg></div>
      <div class="mini"><svg viewBox="0 0 68 36"><rect width="68" height="36" fill="#f6f4f4"/><path d="M0 0h12v36H0z" fill="#ddd3d5"/><path d="M12 4h14v4H12z" fill="#d43f78"/><path d="M14 12h10M14 17h10M14 22h10M14 27h10M28 9h30" stroke="#b9b9bd" stroke-width="1.500"/><path d="M38 16h14M34 22h22" stroke="#6fc091" stroke-width="2.500"/></svg><svg class="chip"><use href="#mail"/></svg></div>
      <div class="mini"><svg viewBox="0 0 68 46"><rect width="68" height="46" fill="#fbfbfc"/><path d="M0 0h68v6H0z" fill="#25282e"/><path d="M0 7h18v4H0z" fill="#a9c6ee"/><path d="M22 13h22M22 20h14M22 25h30M48 20h14" stroke="#b6b9c4" stroke-width="1.500"/><path d="M18 6v40M0 44h17" stroke="#8fb0dd"/></svg><svg class="chip"><use href="#github"/></svg></div>
      <div class="mini"><svg viewBox="0 0 68 50"><rect width="68" height="50" fill="#f5f5f4"/><path d="M24 4h44v46H24z" fill="#e9e2d9"/><path d="M44 5h22v19H44z" fill="#6d706c"/><path d="M9 8v40" stroke="#7b5c55" stroke-width="4" stroke-dasharray="4 2"/><path d="M13 10h9M13 16h9M13 22h9M13 28h9M13 34h9M13 40h9" stroke="#bbb" stroke-width="1.500"/><path d="M44 27h18" stroke="#b9e3a5" stroke-width="3"/></svg><svg class="chip"><use href="#whatsapp"/></svg></div>
    </div>
    <svg class="trash" width="52" height="66" viewBox="0 0 52 66"><path d="M2 12l6 48q1 6 9 6h18q8 0 9-6l6-48z" fill="#dcdcdd"/><path d="M8 16l6 46M18 16l3 48M34 16l-3 48M44 16l-6 46M12 24l24 34M40 24L16 58" stroke="#cfd0d2" stroke-width="1.500"/><ellipse cx="26" cy="12" rx="25" ry="6" fill="#a8a9ab"/><path d="M4 12l6-10 7 5 5-7 6 7 7-6 4 6 7 1 2 8-22 4z" fill="#eceded"/><path d="M10 3l5 11M28 7l-3 8M36 2l-4 12" stroke="#555" stroke-width="1.800"/><path d="M20 7l4 5" stroke="#3a8fd0" stroke-width="2.500"/><path d="M38 8l2 6" stroke="#d8853a" stroke-width="2.500"/></svg>
  </footer>
</div>
</body>
</html>
```
FILE: styles.css
```css
* { box-sizing: border-box; }
body { margin: 0; font-family: Inter, "Liberation Sans", sans-serif; }
svg { display: block; flex: none; }
.defs { position: absolute; }

.desktop {
  width: 2880px;
  height: 1800px;
  overflow: hidden;
  display: flex;
  flex-direction: column;
  background:
    radial-gradient(300px 40px at 2300px 1690px, #3a2a33 0, transparent 100%),
    radial-gradient(300px 40px at 1750px 1690px, #2a2330 0, transparent 100%),
    linear-gradient(180deg, transparent 1680px, #131c30 1681px, rgba(19, 28, 48, 0) 1800px),
    linear-gradient(90deg, #1b3358 0, #16233f 12%, #1d2240 35%, #1b2f54 55%, #1b2f52 80%, #202d4b 100%);
}

/* macOS menu bar */
.menubar {
  height: 50px;
  flex: none;
  display: flex;
  align-items: center;
  padding: 0 37px 3px 41px;
  color: #fff;
  font-size: 26px;
  font-weight: 500;
  letter-spacing: -.5px;
  background: linear-gradient(90deg, #2a3f5e, #2c3959 45%, #2b3452);
  border-bottom: 2px solid #05060c;
}
.menubar span, .menubar svg { filter: drop-shadow(0 3px 4px rgba(0, 0, 0, .3)); }
.apple { width: 26px; height: 31px; margin: -2px 41px 0 0; }
.menus { display: flex; gap: 41px; flex: 1; letter-spacing: -.53px; }
.app-name { font-weight: 700; letter-spacing: 0; }
.status { display: flex; align-items: center; gap: 36px; margin-right: 36px; }
.status svg:first-child { margin-right: -2px; }
.status svg:nth-child(3) { margin-right: -2px; }
.status svg:nth-child(5) { margin-right: 3px; }
.clock { display: flex; gap: 17px; color: #eceef1; letter-spacing: .08px; }

/* Browser window */
.window {
  height: 1632px;
  flex: none;
  border-radius: 20px;
  overflow: hidden;
  display: flex;
  flex-direction: column;
  background: #e7def5;
}
.tabstrip {
  height: 80px;
  flex: none;
  display: flex;
  align-items: center;
  box-shadow: inset 0 2px #f4effc;
  padding-right: 12px;
}
.lights { width: 178px; flex: none; display: flex; gap: 16px; padding-left: 42px; }
.lights i { width: 24px; height: 24px; border-radius: 50%; border: 1px solid rgba(0, 0, 0, .15); }
.red { background: #ec6a5e; }
.yellow { background: #f4bf4f; }
.green { background: #61c554; }
.tab {
  width: 352px;
  height: 32px;
  flex: none;
  display: flex;
  align-items: center;
  padding-left: 22px;
  color: #4b4458;
  font-size: 24px;
  border-right: 3px solid #cbbcf8;
}
.tab.last { border-color: transparent; }
.fav { width: 32px; height: 32px; margin-right: 16px; }
.tab-title {
  width: 217px;
  margin: -2px 17px 0 0;
  white-space: nowrap;
  overflow: hidden;
  letter-spacing: -.1px;
  mask-image: linear-gradient(90deg, #000 166px, transparent 214px);
}
.tx { width: 20px; height: 20px; }
.tab.active {
  width: 340px;
  height: 68px;
  align-self: flex-end;
  margin-left: 6px;
  padding: 0 0 12px 16px;
  border: 0;
  border-radius: 20px 20px 0 0;
  background: #fdf8fe;
  color: #1d1b20;
  position: relative;
}
.tab.active::before, .tab.active::after {
  content: "";
  position: absolute;
  bottom: 0;
  width: 24px;
  height: 24px;
  background: radial-gradient(circle at 0 0, transparent 23.5px, #fdf8fe 24px);
}
.tab.active::before { left: -24px; }
.tab.active::after { right: -24px; background: radial-gradient(circle at 100% 0, transparent 23.5px, #fdf8fe 24px); }
.brevo-fav { color: #42946a; }
.newtab { margin-left: 28px; }
.tabsearch {
  width: 56px;
  height: 56px;
  margin-left: auto;
  border-radius: 20px;
  background: #f4ecfd;
  display: grid;
  place-items: center;
}

.toolbar {
  height: 94px;
  flex: none;
  display: flex;
  align-items: center;
  padding: 0 36px 0 30px;
  background: #fdf8fe;
  border-bottom: 2px solid #e6dfee;
  border-radius: 20px 20px 0 0;
}
.navs { display: flex; gap: 44px; width: 210px; }
.omnibox {
  width: 2364px;
  height: 68px;
  border-radius: 34px;
  background: #ece7f0;
  display: flex;
  align-items: center;
  padding: 0 30px 0 10px;
}
.siteinfo { width: 48px; height: 48px; border-radius: 50%; background: #fdf8fe; display: grid; place-items: center; }
.url { margin-left: 16px; flex: 1; font-size: 28px; letter-spacing: -.15px; color: #1d1b20; }
.url b { font-weight: 400; color: #4a4650; }
.puzzle { margin-left: 35px; }
.tsep { width: 4px; height: 32px; margin: 0 32px 0 33px; background: #e8e0fa; }
.avatar {
  width: 40px;
  height: 40px;
  border-radius: 50%;
  background: #225a9c;
  color: #fff;
  font-size: 20px;
  display: grid;
  place-items: center;
}
.kebab { display: flex; flex-direction: column; gap: 5px; margin-left: auto; width: 16px; align-items: center; }
.kebab i { width: 6px; height: 6px; border-radius: 50%; background: #4b4458; }

/* Dimmed automation editor */
.page { flex: 1; position: relative; display: flex; flex-direction: column; background: #bfc3ba; overflow: hidden; }
.banner {
  height: 96px;
  flex: none;
  display: flex;
  align-items: center;
  justify-content: center;
  gap: 32px;
  background: #b5b9b9;
  color: #333a31;
  font-size: 32px;
  letter-spacing: .05px;
}
.banner svg { margin-left: -1px; }
.banner span { margin-top: -1px; }
.apphead {
  height: 114px;
  flex: none;
  display: flex;
  align-items: center;
  padding: 0 32px 0 48px;
  border-bottom: 2px solid #a5aaa1;
  color: #333a31;
  font-size: 32px;
  font-weight: 600;
}
.logo { width: 64px; height: 64px; color: #52876a; --b: #bfc3ba; }
.wf-name { margin-left: 41px; flex: 1; }
.exit-btn { height: 79px; line-height: 74px; padding: 0 32px; border: 2px solid #a5aaa1; border-radius: 34px; box-shadow: 0 3px 4px rgba(0, 0, 0, .06); }
.workspace { flex: 1; display: grid; grid-template-columns: 160px 842px 1fr; }
.rail-wrap { position: relative; padding: 0 2px 4px 0; background: #babeb5; }
.rail {
  height: 100%;
  display: flex;
  flex-direction: column;
  gap: 8px;
  padding: 12px 0 0 14px;
  background: #b8bdb4;
  border: solid #a5aaa1;
  border-width: 0 3px 3px 0;
  border-radius: 0 0 56px 0;
}
.rail-item {
  width: 128px;
  height: 128px;
  border-radius: 32px;
  padding-top: 29px;
  display: flex;
  flex-direction: column;
  align-items: center;
  color: #333a31;
  font-size: 24px;
  font-weight: 500;
  line-height: 30px;
}
.rail-item.on { background: #a7aab5; }
.cut { margin-right: 11px; letter-spacing: -.1px; }
.rail-mark { position: absolute; left: 148px; top: 28px; width: 8px; height: 96px; background: #615fa3; border-radius: 6px 0 0 6px; }
.panel { display: flex; flex-direction: column; justify-content: flex-end; border-right: 2px solid #a5aaa1; padding: 0 32px 32px; background: linear-gradient(180deg, transparent 1180px, rgba(0, 0, 0, .09) 100%); }
.panel-foot { display: flex; justify-content: flex-end; align-items: center; gap: 49px; font-size: 32px; font-weight: 600; letter-spacing: -.3px; }
.cancel { color: #615fa3; margin-top: -1px; }
.save { width: 148px; height: 80px; padding-bottom: 1px; border-radius: 32px; background: #383c35; color: #bfc3ba; display: grid; place-items: center; }
.canvas {
  position: relative;
  background:
    linear-gradient(180deg, transparent 1180px, rgba(0, 0, 0, .08) 100%),
    radial-gradient(circle, #b3b8af 3.600px, transparent 4.400px) -3px 8.700px / 42px 42px;
}
.node {
  position: absolute;
  left: 860px;
  top: 1097px;
  width: 156px;
  height: 80px;
  border-radius: 24px;
  background: #a9aea5;
  display: flex;
  align-items: center;
  gap: 17px;
  padding-left: 14px;
  color: #333a31;
  font-size: 30px;
  font-weight: 500;
}
.zoombox {
  position: absolute;
  left: 1548px;
  top: 1142px;
  width: 301px;
  height: 76px;
  border: 2px solid #62706d;
  border-radius: 14px;
  background: #bdc1b8;
  display: flex;
  align-items: center;
  padding-left: 24px;
  color: #262b25;
  font-size: 26px;
  letter-spacing: -.5px;
}
.zoombox span { margin: -1px 30px 0 31px; }
.zoombox .full { margin-left: 48px; }

/* Email preview dialog */
.modal {
  position: absolute;
  left: 160px;
  top: 109px;
  width: 2560px;
  height: 1240px;
  border-radius: 32px;
  overflow: hidden;
  background: #fff;
  box-shadow: 0 8px 60px rgba(0, 0, 0, .13), 0 4px 12px rgba(0, 0, 0, .06);
  display: flex;
  flex-direction: column;
}
.modal-head { height: 192px; flex: none; display: flex; align-items: center; padding: 0 80px 0 64px; }
.modal-head h1 { margin: 0; font-size: 48px; font-weight: 400; letter-spacing: .72px; word-spacing: -3.400px; color: #1b1b1b; -webkit-text-stroke: .6px #1b1b1b; white-space: nowrap; }
.party { margin-left: 10px; }
.close { margin-left: auto; }
.frame {
  flex: 1;
  min-height: 0;
  overflow: hidden;
  margin: 0 64px;
  background: #f4f4f4;
  border: solid #dedede;
  border-width: 0 2px;
}
.modal::after {
  content: "";
  position: absolute;
  left: 0;
  right: 0;
  bottom: 0;
  height: 50px;
  background: linear-gradient(180deg, rgba(255, 255, 255, 0), #fff 95%);
}
.email { width: 1216px; margin: 0 auto; background: #fff; font-family: "Liberation Sans", Arial, sans-serif; color: #3b3f44; }
.pink { margin: 0 8px; padding: 0 10px 40px; background: #fef4fe; border-radius: 0 0 16px 16px; font-size: 32px; line-height: 48px; }
.pink p { margin: 0; white-space: nowrap; }
.pink .thanks { margin-top: 96px; }
.rule { height: 6px; margin: 60px 8px 100px; border: 0; background: #4a4a4a; }
.social { display: flex; justify-content: center; gap: 16px; padding-bottom: 40px; }
.foot { padding-top: 74px; height: 400px; background: #f0f1f6; text-align: center; }
.foot h2 { margin: 0; font-family: Inter, "Liberation Sans", sans-serif; font-size: 36px; font-weight: 900; line-height: 48px; letter-spacing: 1.950px; -webkit-text-stroke: .4px #3b3f44; }
.foot p { margin: 0; font-size: 28px; line-height: 49px; }
.foot .legal { margin-top: 26px; line-height: 42px; }

/* Dock */
.dock {
  width: 2763px;
  height: 94px;
  margin: 14px 0 0 59px;
  flex: none;
  display: flex;
  gap: 18.670px;
  padding: 13px 0 0 12px;
  border: 2px solid #8390ab;
  border-radius: 28px;
  background: linear-gradient(90deg, #5e7899 0, #63718d 13%, #5f6a87 20%, #61759a 33%, #667595 42%, #777791 49%, #6a7594 57%, #60759a 66%, #67718f 76%, #80707f 83%, #6b6f8d 90%, #676d88 100%);
}
.app { width: 58px; height: 58px; flex: none; position: relative; }
.app > svg { width: 58px; height: 58px; overflow: visible; filter: drop-shadow(0 1px 1px rgba(0, 0, 0, .3)); }
.app > svg.tall { height: 62px; }
.run::after { content: ""; position: absolute; left: 25px; top: 67px; width: 8px; height: 8px; border-radius: 50%; background: #03041a; }
.badge {
  position: absolute;
  top: -7px;
  right: -10px;
  min-width: 27px;
  height: 27px;
  border-radius: 14px;
  background: #e4513f;
  color: #fff;
  font-size: 14px;
  font-weight: 400;
  line-height: 27px;
  text-align: center;
}
.badge.wide { right: -8px; width: 44px; }
.cal { border-radius: 13px; background: linear-gradient(180deg, #e2594f 18px, #fbfbfa 18px); display: flex; flex-direction: column; align-items: center; }
.mon { height: 18px; line-height: 20px; color: #fff; font-size: 12px; font-weight: 600; }
.day { font-size: 34px; line-height: 38px; color: #2a2a2a; font-weight: 300; letter-spacing: -1px; }
.tv { border-radius: 13px; background: linear-gradient(180deg, #2b3632, #0b0f10); color: #fff; display: flex; align-items: center; justify-content: center; gap: 1px; font-size: 27px; font-weight: 500; letter-spacing: -.5px; }
.app > svg.tv-apple { width: 17px; height: 21px; }
.dsep { width: 15.500px; height: 70px; margin-top: -4px; flex: none; background: linear-gradient(90deg, transparent 9px, #3a4769 9px, #3a4769 11px, transparent 11px); }
.dsep.second { width: 12px; }
.minis { display: flex; gap: 8.400px; align-items: center; height: 58px; }
.mini { position: relative; width: 68px; }
.mini > svg:first-child { width: 68px; height: auto; }
.chip { position: absolute; right: -3px; top: calc(50% + 10px); width: 24px; height: 24px; }
.trash { margin-top: -5px; margin-left: -3px; }
```
